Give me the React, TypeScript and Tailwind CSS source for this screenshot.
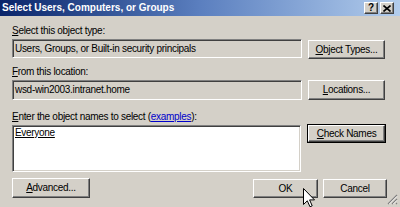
import React from "react";

const raised =
  "bg-[#d4d0c8] border border-t-white border-l-white border-b-[#404040] border-r-[#404040] shadow-[inset_-1px_-1px_0_#808080] flex items-center justify-center";
const sunken =
  "border border-t-[#808080] border-l-[#808080] border-b-white border-r-white shadow-[inset_1px_1px_0_#404040,inset_-1px_-1px_0_#d4d0c8]";

function TitleBtn({ children }: { children: React.ReactNode }) {
  return (
    <div className={`${raised} w-[14px] h-[12px] text-[10px] leading-[10px] font-bold text-black tracking-normal`}>
      {children}
    </div>
  );
}

export default function App() {
  return (
    <div className="w-[400px] h-[207px] bg-[#d4d0c8] relative overflow-hidden font-['Liberation_Sans',Arial,sans-serif] text-[10px] leading-[12px] tracking-[-0.3px] text-black">
      <div className="h-[16px] flex items-center justify-between pl-[2px] pr-[6px] bg-linear-to-r from-[#0a246a] via-[#5b7fbf] to-[#b3cdec]">
        <span className="font-bold text-white tracking-normal">Select Users, Computers, or Groups</span>
        <div className="flex gap-[2px]">
          <TitleBtn>?</TitleBtn>
          <TitleBtn>
            <svg width="8" height="7" viewBox="0 0 8 7">
              <path d="M0.5 0.5 L7.5 6.5 M7.5 0.5 L0.5 6.5" stroke="black" strokeWidth="1.6" />
            </svg>
          </TitleBtn>
        </div>
      </div>
      <div className="pl-[12px] pr-[14px] pt-[9px] flex flex-col">
        <div className="h-[12px]">
          <span className="underline">S</span>elect this object type:
        </div>
        <div className="mt-[2px] flex gap-[6px] items-start">
          <div className={`${sunken} w-[290px] h-[19px] flex items-center pl-[2px]`}>
            Users, Groups, or Built-in security principals
          </div>
          <div className={`${raised} w-[77px] h-[19px] mt-[1px]`}>
            <span>
              <span className="underline">O</span>bject Types...
            </span>
          </div>
        </div>
        <div className="mt-[7px] h-[12px]">
          <span className="underline">F</span>rom this location:
        </div>
        <div className="mt-[2px] flex gap-[6px] items-start">
          <div className={`${sunken} w-[290px] h-[20px] flex items-center pl-[2px]`}>
            wsd-win2003.intranet.home
          </div>
          <div className={`${raised} w-[77px] h-[20px]`}>
            <span>
              <span className="underline">L</span>ocations...
            </span>
          </div>
        </div>
        <div className="mt-[11px] h-[12px]">
          <span className="underline">E</span>nter the object names to select (
          <span className="underline text-[#0000cc]">examples</span>):
        </div>
        <div className="mt-[1px] flex gap-[6px] items-start">
          <div className={`${sunken} bg-white w-[290px] h-[47px] mt-[1px] pl-[2px] pt-[1px]`}>
            <span className="underline">Everyone</span>
          </div>
          <div className="border border-black w-[79px] h-[19px] flex">
            <div className={`${raised} flex-1`}>
              <span>
                <span className="underline">C</span>heck Names
              </span>
            </div>
          </div>
        </div>
        <div className="mt-[6px] flex justify-between items-start">
          <div className={`${raised} w-[78px] h-[20px]`}>
            <span>
              <span className="underline">A</span>dvanced...
            </span>
          </div>
          <div className="flex gap-[5px] mt-[1px] -mr-[1px]">
            <div className={`${raised} w-[65px] h-[19px]`}>OK</div>
            <div className={`${raised} w-[64px] h-[19px]`}>Cancel</div>
          </div>
        </div>
      </div>
      <svg className="absolute right-[2px] bottom-[2px]" width="11" height="11" viewBox="0 0 11 11">
        <path d="M10 1 L1 10 M10 5 L5 10 M10 9 L9 10" stroke="#808080" strokeWidth="1.2" />
        <path d="M10 2.3 L2.3 10 M10 6.3 L6.3 10" stroke="white" strokeWidth="0.8" />
      </svg>
      <svg className="absolute left-[303px] top-[188px]" width="12" height="20" viewBox="0 0 12 20">
        <path d="M0.5 0.5 L0.5 16.5 L4.3 12.8 L7 18.8 L9.2 17.8 L6.6 11.9 L11.5 11.9 Z" fill="white" stroke="black" strokeWidth="1" strokeLinejoin="miter" />
      </svg>
    </div>
  );
}
